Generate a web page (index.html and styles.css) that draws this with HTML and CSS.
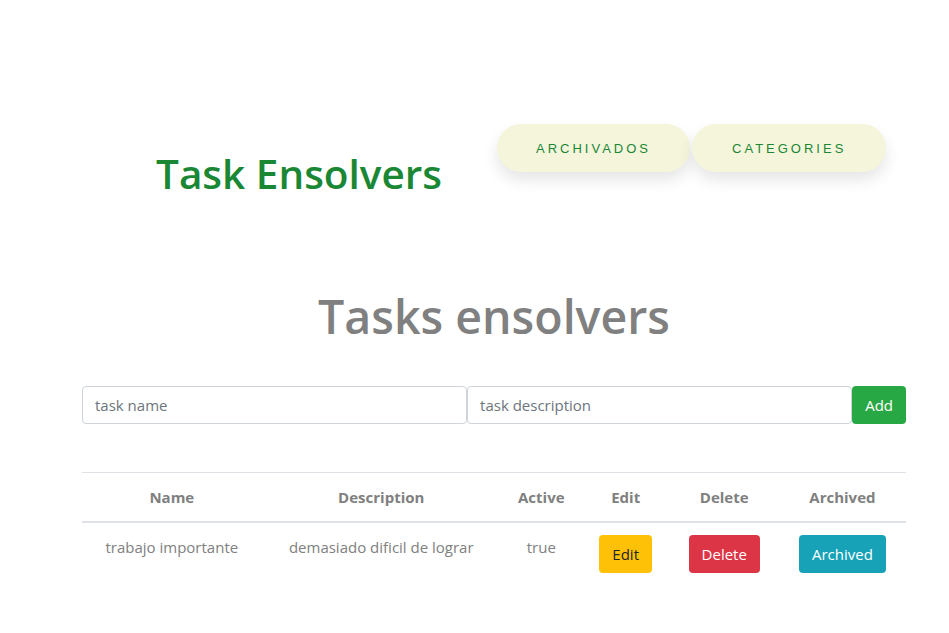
FILE: index.html
```html
<!DOCTYPE html>
<html lang="es">
<head>
<meta charset="utf-8">
<title>Task Ensolvers</title>
<link rel="stylesheet" href="styles.css">
</head>
<body>
<header class="topbar">
  <h1 class="brand">Task Ensolvers</h1>
  <nav class="nav">
    <button class="pill">Archivados</button>
    <button class="pill">Categories</button>
  </nav>
</header>
<main class="container">
  <h2 class="page-title">Tasks ensolvers</h2>
  <form class="add-form">
    <input class="field" type="text" placeholder="task name">
    <input class="field" type="text" placeholder="task description">
    <button type="button" class="btn btn-success">Add</button>
  </form>
  <table class="tasks">
    <thead>
      <tr>
        <th>Name</th>
        <th>Description</th>
        <th>Active</th>
        <th>Edit</th>
        <th>Delete</th>
        <th>Archived</th>
      </tr>
    </thead>
    <tbody>
      <tr>
        <td>trabajo importante</td>
        <td>demasiado dificil de lograr</td>
        <td>true</td>
        <td class="action"><button class="btn btn-warning">Edit</button></td>
        <td class="action"><button class="btn btn-danger">Delete</button></td>
        <td class="action"><button class="btn btn-info">Archived</button></td>
      </tr>
    </tbody>
  </table>
</main>
</body>
</html>
```
FILE: styles.css
```css
* { box-sizing: border-box; }
body {
  margin: 0;
  font-family: "Open Sans", "Noto Sans", sans-serif;
  color: #808080;
  background: #fff;
}
.topbar {
  display: flex;
  align-items: flex-start;
  padding: 124px 0 0 156px;
}
.brand {
  margin: 26px 55px 0 0;
  font-size: 40.5px;
  font-weight: 600;
  color: #1a8735;
  line-height: 1.2;
}
.nav { display: flex; gap: 2px; }
.pill {
  height: 48px;
  padding: 0 40px;
  border: none;
  border-radius: 48px;
  background: #f5f5dc;
  color: #1a8735;
  font-family: "Liberation Sans", Arial, sans-serif;
  font-size: 13px;
  letter-spacing: 3px;
  text-transform: uppercase;
  box-shadow: 0 8px 15px rgba(0,0,0,0.1);
}
.pill:first-child { padding: 0 39px; }
.container {
  margin: 0 43px 0 82px;
}
.page-title {
  margin: 90px 0 42px;
  text-align: center;
  font-size: 46.5px;
  font-weight: 600;
  line-height: 1.2;
  color: #808080;
}
.add-form { display: flex; }
.field {
  flex: 1;
  height: 38px;
  padding: 6px 12px;
  border: 1px solid #ced4da;
  border-radius: 4px;
  font-family: inherit;
  font-size: 15px;
  color: #495057;
}
.field::placeholder { color: #6c757d; }
.btn {
  height: 38px;
  padding: 6px 12px;
  border: 1px solid transparent;
  border-radius: 4px;
  font-family: inherit;
  font-size: 15px;
  color: #fff;
  line-height: 1.5;
}
.btn-success { background: #28a745; }
.btn-warning { background: #ffc107; color: #212529; }
.btn-danger { background: #dc3545; }
.btn-info { background: #17a2b8; }
.tasks {
  width: 100%;
  margin-top: 48px;
  border-collapse: collapse;
  font-size: 15px;
}
.tasks th, .tasks td {
  text-align: center;
  vertical-align: top;
  border-top: 1px solid #dee2e6;
}
.tasks th {
  padding: 14px 12px 14px;
  font-weight: 700;
  border-bottom: 2px solid #dee2e6;
}
.tasks td { padding: 14px 12px 12px; }
.tasks td.action { padding-top: 12px; }
```
